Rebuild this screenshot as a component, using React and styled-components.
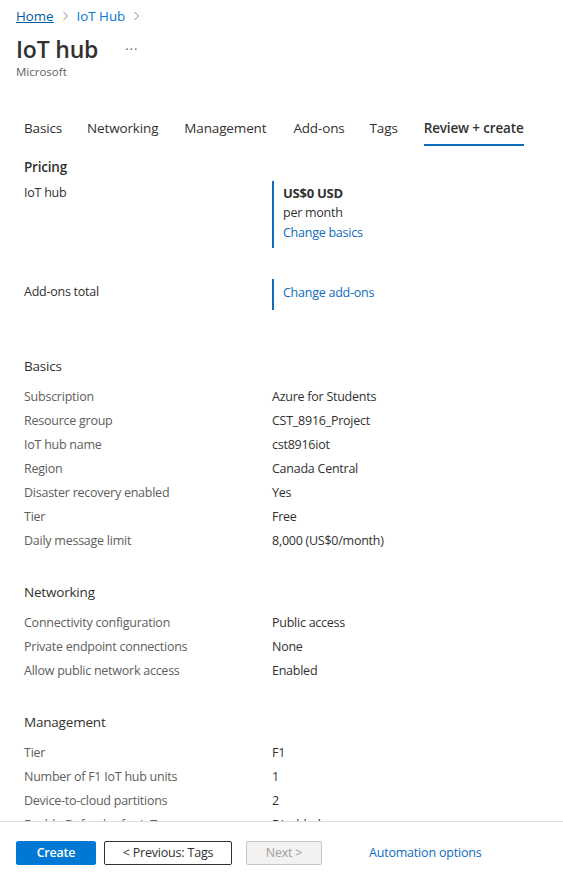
import React from "react";
import styled, { createGlobalStyle } from "styled-components";

const Global = createGlobalStyle`
  html, body { margin: 0; padding: 0; background: #fff; }
  body { font-family: "Open Sans", "Noto Sans", Arial, sans-serif; color: #323130; }
  * { box-sizing: border-box; }
`;

const Page = styled.div`
  height: 881px;
  display: flex;
  flex-direction: column;
  overflow: hidden;
`;

const Scroll = styled.div`
  flex: 1;
  overflow: hidden;
  min-height: 0;
`;

const Header = styled.header`
  padding: 6px 16px 0 16px;
`;

const Breadcrumb = styled.nav`
  display: flex;
  align-items: center;
  gap: 8px;
  font-size: 13.3px;
  height: 20px;
`;

const Crumb = styled.a`
  color: ${(p) => (p.$home ? "#005a9e" : "#0078d4")};
  text-decoration: ${(p) => (p.$home ? "underline" : "none")};
  cursor: pointer;
`;

const Chevron = styled.span`
  display: inline-flex;
  color: #8a8886;
`;

const TitleRow = styled.div`
  display: flex;
  align-items: center;
  margin-top: 8px;
  height: 30px;
`;

const Title = styled.h1`
  margin: 0;
  font-size: 23px;
  font-weight: 600;
  letter-spacing: -0.2px;
  color: #323130;
`;

const More = styled.span`
  margin-left: 27px;
  font-size: 13px;
  color: #605e5c;
  letter-spacing: 1px;
  position: relative;
  top: 0px;
`;

const Subtitle = styled.div`
  font-size: 11.5px;
  color: #605e5c;
`;

const Tabs = styled.div`
  display: flex;
  padding-left: 24px;
  margin-top: 38px;
  height: 29px;
`;

const Tab = styled.div`
  font-size: 13.5px;
  font-weight: ${(p) => (p.$active ? 600 : 400)};
  color: #323130;
  margin-right: ${(p) => p.$gap}px;
  height: 29px;
  line-height: 22px;
  border-bottom: 2px solid ${(p) => (p.$active ? "#0f6cbd" : "transparent")};
  letter-spacing: -0.15px;
`;

const Body = styled.div`
  padding: 10px 24px 0 24px;
`;

const Section = styled.section`
  margin-bottom: ${(p) => p.$mb || 29}px;
`;

const SectionTitle = styled.h2`
  margin: 0 0 ${(p) => p.$mb ?? 7}px 0;
  font-size: 13.5px;
  font-weight: ${(p) => (p.$strong ? 600 : 400)};
  color: #323130;
  height: 22px;
  line-height: 22px;
  letter-spacing: -0.2px;
`;

const Row = styled.div`
  display: grid;
  grid-template-columns: 248px 1fr;
  height: 24px;
  align-items: center;
  font-size: 12.5px;
  letter-spacing: -0.25px;
`;

const Label = styled.div`
  color: #605e5c;
  white-space: nowrap;
`;

const Value = styled.div`
  color: #323130;
  white-space: nowrap;
`;

const PriceRow = styled.div`
  display: grid;
  grid-template-columns: 248px 1fr;
  margin-bottom: ${(p) => p.$mb || 0}px;
  font-size: 12.5px;
  letter-spacing: -0.25px;
`;

const PriceLabel = styled.div`
  color: #323130;
  padding-top: ${(p) => p.$pt || 0}px;
  line-height: 20px;
`;

const PriceBox = styled.div`
  border-left: 2px solid #0f6cbd;
  padding: ${(p) => p.$pad};
  display: flex;
  flex-direction: column;
`;

const Price = styled.div`
  font-weight: 700;
  font-size: 13px;
  line-height: 20px;
  color: #323130;
`;

const Plain = styled.div`
  line-height: 20px;
  color: #323130;
`;

const Link = styled.a`
  color: #0f6cbd;
  line-height: ${(p) => p.$lh || 20}px;
  cursor: pointer;
`;

const Footer = styled.footer`
  flex: 0 0 60px;
  border-top: 1px solid #e1dfdd;
  display: flex;
  align-items: center;
  padding: 2px 16px 0 16px;
  background: #fff;
`;

const Button = styled.button`
  font-family: inherit;
  height: 24px;
  line-height: 20px;
  font-size: 12.5px;
  letter-spacing: -0.2px;
  border-radius: 2px;
  padding: 0;
  width: ${(p) => p.$w}px;
  margin-right: ${(p) => p.$mr}px;
  font-weight: ${(p) => (p.$variant === "primary" ? 600 : 400)};
  background: ${(p) =>
    p.$variant === "primary" ? "#0078d4" : p.$variant === "disabled" ? "#f3f2f1" : "#fff"};
  color: ${(p) =>
    p.$variant === "primary" ? "#fff" : p.$variant === "disabled" ? "#a19f9d" : "#323130"};
  border: 1px solid
    ${(p) =>
      p.$variant === "primary" ? "#0078d4" : p.$variant === "disabled" ? "#c8c6c4" : "#323130"};
`;

const FooterLink = styled.a`
  color: #0f6cbd;
  font-size: 12.5px;
  letter-spacing: -0.2px;
  line-height: 20px;
`;

const ChevronIcon = () => (
  <svg width="7" height="10" viewBox="0 0 7 10">
    <path d="M1.5 1 L5.5 5 L1.5 9" fill="none" stroke="currentColor" strokeWidth="1" />
  </svg>
);

const basics = [
  ["Subscription", "Azure for Students"],
  ["Resource group", "CST_8916_Project"],
  ["IoT hub name", "cst8916iot"],
  ["Region", "Canada Central"],
  ["Disaster recovery enabled", "Yes"],
  ["Tier", "Free"],
  ["Daily message limit", "8,000 (US$0/month)"],
];

const networking = [
  ["Connectivity configuration", "Public access"],
  ["Private endpoint connections", "None"],
  ["Allow public network access", "Enabled"],
];

const management = [
  ["Tier", "F1"],
  ["Number of F1 IoT hub units", "1"],
  ["Device-to-cloud partitions", "2"],
  ["Enable Defender for IoT", "Disabled"],
  ["Assign me the IoT Hub Data Contributor role", "Enabled"],
];

const tabs = [
  ["Basics", 25],
  ["Networking", 26],
  ["Management", 27],
  ["Add-ons", 25],
  ["Tags", 26],
  ["Review + create", 0],
];

const Rows = ({ items }) =>
  items.map(([l, v]) => (
    <Row key={l}>
      <Label>{l}</Label>
      <Value>{v}</Value>
    </Row>
  ));

export default function App() {
  return (
    <>
      <Global />
      <Page>
        <Scroll>
          <Header>
            <Breadcrumb>
              <Crumb $home>Home</Crumb>
              <Chevron>
                <ChevronIcon />
              </Chevron>
              <Crumb>IoT Hub</Crumb>
              <Chevron>
                <ChevronIcon />
              </Chevron>
            </Breadcrumb>
            <TitleRow>
              <Title>IoT hub</Title>
              <More>···</More>
            </TitleRow>
            <Subtitle>Microsoft</Subtitle>
          </Header>
          <Tabs>
            {tabs.map(([t, g], i) => (
              <Tab key={t} $gap={g} $active={i === tabs.length - 1}>
                {t}
              </Tab>
            ))}
          </Tabs>
          <Body>
            <Section $mb={45}>
              <SectionTitle $strong $mb={3}>Pricing</SectionTitle>
              <PriceRow $mb={31}>
                <PriceLabel $pt={2}>IoT hub</PriceLabel>
                <PriceBox $pad="2px 0 6px 9px">
                  <Price>US$0 USD</Price>
                  <Plain>per month</Plain>
                  <Link $lh={19}>Change basics</Link>
                </PriceBox>
              </PriceRow>
              <PriceRow>
                <PriceLabel $pt={3}>Add-ons total</PriceLabel>
                <PriceBox $pad="4px 0 7px 9px">
                  <Link>Change add-ons</Link>
                </PriceBox>
              </PriceRow>
            </Section>
            <Section>
              <SectionTitle>Basics</SectionTitle>
              <Rows items={basics} />
            </Section>
            <Section>
              <SectionTitle>Networking</SectionTitle>
              <Rows items={networking} />
            </Section>
            <Section>
              <SectionTitle>Management</SectionTitle>
              <Rows items={management} />
            </Section>
          </Body>
        </Scroll>
        <Footer>
          <Button $variant="primary" $w={80} $mr={8}>
            Create
          </Button>
          <Button $w={128} $mr={14}>
            &lt; Previous: Tags
          </Button>
          <Button $variant="disabled" $w={76} $mr={47} disabled>
            Next &gt;
          </Button>
          <FooterLink>Automation options</FooterLink>
        </Footer>
      </Page>
    </>
  );
}
